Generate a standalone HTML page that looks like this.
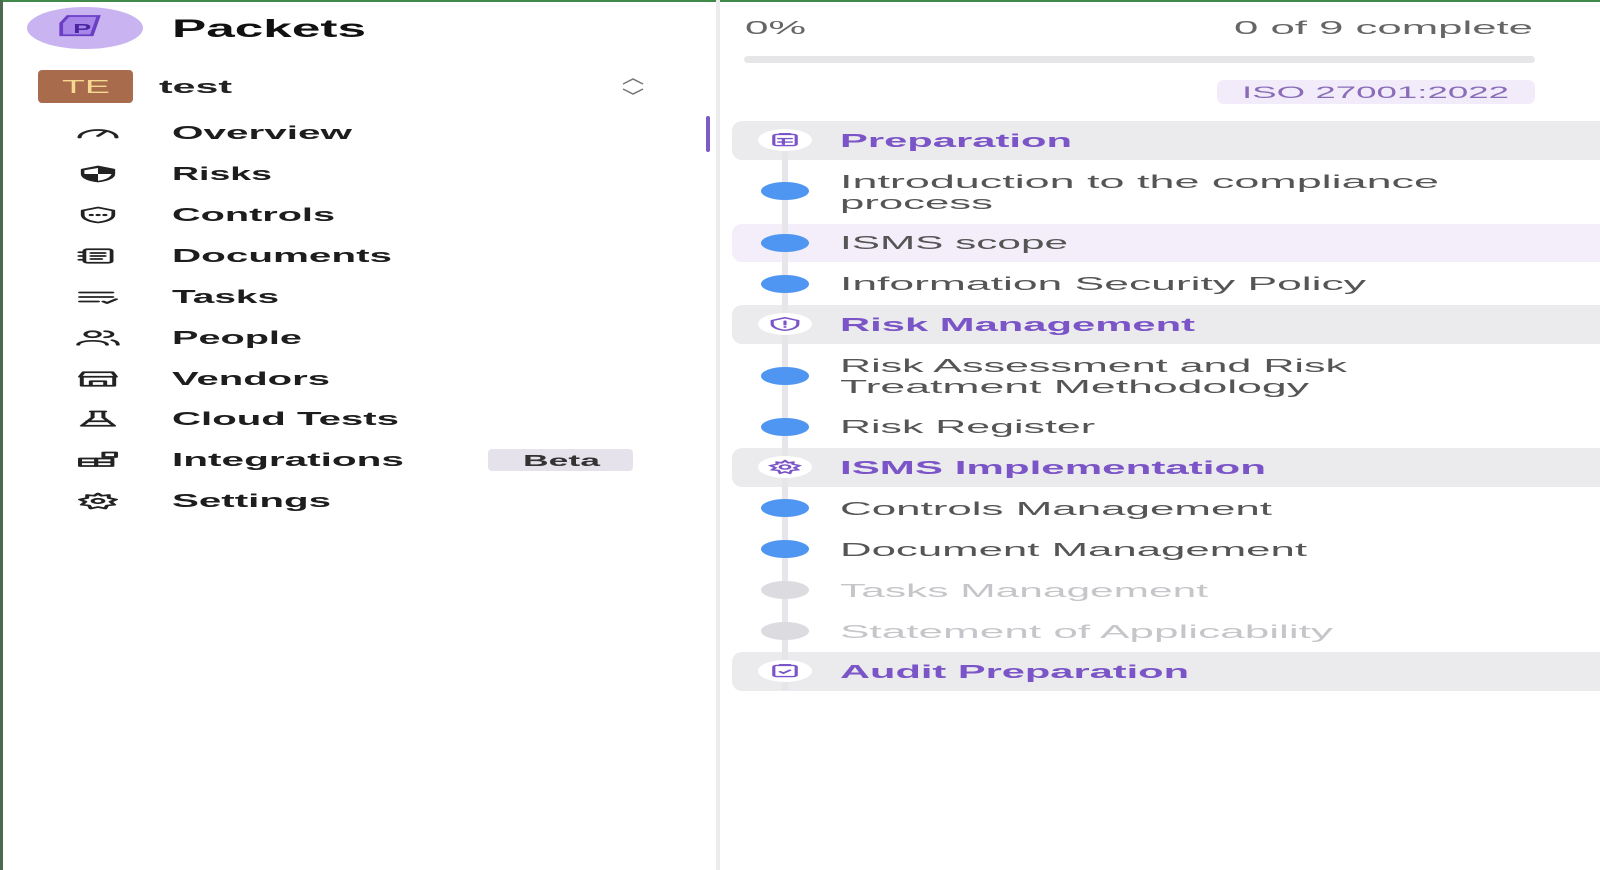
<!DOCTYPE html>
<html><head><meta charset="utf-8"><style>
html,body{margin:0;padding:0;background:#fff;width:1600px;height:870px;overflow:hidden}
svg{display:block}
text{font-family:"Liberation Sans",sans-serif}
</style></head><body>
<svg width="1600" height="870" viewBox="0 0 1600 870" xmlns="http://www.w3.org/2000/svg">
<rect width="1600" height="870" fill="#fff"/>
<rect x="0" y="0" width="1600" height="2" fill="#3f8a4a"/>
<rect x="0" y="0" width="3" height="870" fill="#4c6a50"/>
<rect x="716" y="0" width="4" height="870" fill="#ececee"/>
<rect x="706" y="116" width="4" height="36" rx="2" fill="#7b5cc4"/>

<ellipse cx="85" cy="28" rx="58" ry="21" fill="#c9b3f0"/>
<g transform="translate(85,28) scale(1.7,0.8)" fill="none" stroke="#6b3fc4" stroke-width="2.2">
<path d="M-14 -6 l4 -9 h18 l-4 24 h-18z" fill="#a786ea"/>
<text x="-7" y="6" font-size="16" font-weight="bold" fill="#4a24a0" stroke="none">P</text>
</g>
<text x="172" y="37" font-size="25" font-weight="bold" fill="#111" textLength="194" lengthAdjust="spacingAndGlyphs">Packets</text>

<rect x="38" y="70" width="95" height="33" rx="4" fill="#a86c4c"/>
<text x="62" y="93" font-size="18" fill="#f6d98e" textLength="48" lengthAdjust="spacingAndGlyphs">TE</text>
<text x="159" y="93" font-size="18" font-weight="bold" fill="#222" textLength="73" lengthAdjust="spacingAndGlyphs">test</text>
<path d="M623 84 l10 -5 l10 5 M623 89 l10 5 l10 -5" fill="none" stroke="#777" stroke-width="1.5"/>

<g font-size="18" font-weight="bold" fill="#1d1d1d">
<text x="172" y="139" textLength="180" lengthAdjust="spacingAndGlyphs">Overview</text>
<text x="172" y="180" textLength="100" lengthAdjust="spacingAndGlyphs">Risks</text>
<text x="172" y="221" textLength="163" lengthAdjust="spacingAndGlyphs">Controls</text>
<text x="172" y="262" textLength="220" lengthAdjust="spacingAndGlyphs">Documents</text>
<text x="172" y="303" textLength="107" lengthAdjust="spacingAndGlyphs">Tasks</text>
<text x="172" y="344" textLength="130" lengthAdjust="spacingAndGlyphs">People</text>
<text x="172" y="385" textLength="158" lengthAdjust="spacingAndGlyphs">Vendors</text>
<text x="172" y="425" textLength="227" lengthAdjust="spacingAndGlyphs">Cloud Tests</text>
<text x="172" y="466" textLength="232" lengthAdjust="spacingAndGlyphs">Integrations</text>
<text x="172" y="507" textLength="159" lengthAdjust="spacingAndGlyphs">Settings</text>
</g>
<rect x="488" y="449" width="145" height="22" rx="4" fill="#e6e2ec"/>
<text x="523" y="466" font-size="16" font-weight="bold" fill="#333" textLength="77" lengthAdjust="spacingAndGlyphs">Beta</text>

<g fill="none" stroke="#222" stroke-width="2.2" stroke-linecap="round" stroke-linejoin="round">
<g transform="translate(98,133) scale(1.85,0.75)"><path d="M-10 6 A10 10 0 0 1 10 6 M0 4 L4 -2"/></g>
<g transform="translate(98,174) scale(1.7,0.75)"><path d="M0 -10 L9 -6 V0 C9 6 4 9 0 10 C-4 9 -9 6 -9 0 V-6Z" fill="#222"/><path d="M0 0 H8 C7 5 4 8 0 9Z M0 0 H-8 V-5 L0 -8Z" fill="#fff" stroke="none"/></g>
<g transform="translate(98,215) scale(1.7,0.75)"><path d="M0 -10 L9 -6 V0 C9 6 4 9 0 10 C-4 9 -9 6 -9 0 V-6Z"/><path d="M-4 0h.1M0 0h.1M4 0h.1" stroke-width="3"/></g>
<g transform="translate(98,256) scale(1.7,0.75)"><rect x="-8" y="-9" width="16" height="18" rx="2"/><path d="M-4 -4 H4 M-4 0 H4 M-4 4 H2 M-11 -5 H-8 M-11 0 H-8 M-11 5 H-8"/></g>
<g transform="translate(98,297) scale(1.8,0.75)"><path d="M-10 -6 H8 M-10 0 H8 M-10 6 H0 M3 6 L5 8 L10 3"/></g>
<g transform="translate(98,338) scale(1.8,0.75)"><circle cx="-3" cy="-5" r="4"/><path d="M-11 9 C-11 2 5 2 5 9 M4 -9 A4 4 0 0 1 4 -1 M8 3 C10 4 11 6 11 9"/></g>
<g transform="translate(98,379) scale(1.8,0.75)"><path d="M-10 -3 L-8 -9 H8 L10 -3 Z M-9 -3 V9 H9 V-3 M-4 9 V3 H4 V9"/></g>
<g transform="translate(98,419) scale(1.8,0.75)"><path d="M-4 -10 H4 M-3 -10 V-2 L-9 9 H9 L3 -2 V-10 M-6 3 H6"/></g>
<g transform="translate(98,460) scale(1.8,0.75)"><rect x="-10" y="-2" width="9" height="10"/><rect x="-1" y="-2" width="9" height="10"/><rect x="3" y="-10" width="7" height="6"/><path d="M-10 3 H8"/></g>
<g transform="translate(98,501) scale(1.8,0.75)"><circle r="3"/><path d="M0 -10 L2 -7 L6 -8 L6 -4 L10 -2 L7 1 L9 5 L5 6 L4 10 L0 8 L-4 10 L-5 6 L-9 5 L-7 1 L-10 -2 L-6 -4 L-6 -8 L-2 -7Z"/></g>
</g>

<text x="745" y="34" font-size="18" fill="#666" textLength="61" lengthAdjust="spacingAndGlyphs">0%</text>
<text x="1234" y="34" font-size="18" fill="#666" textLength="299" lengthAdjust="spacingAndGlyphs">0 of 9 complete</text>
<rect x="744" y="56" width="791" height="7" rx="3.5" fill="#e6e6e9"/>
<rect x="1217" y="80" width="318" height="24" rx="7" fill="#f1ebfa"/>
<text x="1242" y="98" font-size="17" fill="#8a6cb8" textLength="267" lengthAdjust="spacingAndGlyphs">ISO 27001:2022</text>

<g fill="#ebebee">
<rect x="732" y="121" width="880" height="39" rx="10"/>
<rect x="732" y="305" width="880" height="39" rx="10"/>
<rect x="732" y="448" width="880" height="39" rx="10"/>
<rect x="732" y="652" width="880" height="39" rx="10"/>
</g>
<rect x="732" y="224" width="880" height="38" rx="10" fill="#f3eef9"/>
<rect x="782" y="140" width="6" height="550" fill="#e6e6ea"/>

<g fill="#ffffff">
<ellipse cx="785" cy="140" rx="27" ry="11"/>
<ellipse cx="785" cy="324" rx="27" ry="11"/>
<ellipse cx="785" cy="467" rx="27" ry="11"/>
<ellipse cx="785" cy="671" rx="27" ry="11"/>
</g>
<g fill="none" stroke="#7b55c7" stroke-width="2" stroke-linecap="round">
<g transform="translate(785,140) scale(1.6,0.7)"><rect x="-7" y="-8" width="14" height="16" rx="2"/><path d="M-3 -9 H3 M-4 -2 H4 M-4 3 H4 M-1 -2 V6"/></g>
<g transform="translate(785,324) scale(1.6,0.7)"><path d="M0 -9 L8 -5 V0 C8 5 4 8 0 9 C-4 8 -8 5 -8 0 V-5Z M0 -4 V1 M0 4 V4.5"/></g>
<g transform="translate(785,467) scale(1.6,0.7)"><circle r="3"/><path d="M0 -9 L2 -6 L5 -7 L5 -4 L9 -2 L6 1 L8 4 L4 5 L3 9 L0 7 L-3 9 L-4 5 L-8 4 L-6 1 L-9 -2 L-5 -4 L-5 -7 L-2 -6Z"/></g>
<g transform="translate(785,671) scale(1.6,0.7)"><rect x="-7" y="-8" width="14" height="16" rx="2"/><path d="M-3 -9 H3 M-3 1 L-1 3 L3 -1"/></g>
</g>

<g fill="#4f96f2">
<ellipse cx="785" cy="191" rx="24" ry="9"/>
<ellipse cx="785" cy="243" rx="24" ry="9"/>
<ellipse cx="785" cy="284" rx="24" ry="9"/>
<ellipse cx="785" cy="376" rx="24" ry="9"/>
<ellipse cx="785" cy="427" rx="24" ry="9"/>
<ellipse cx="785" cy="508" rx="24" ry="9"/>
<ellipse cx="785" cy="549" rx="24" ry="9"/>
</g>
<g fill="#dcdce0">
<ellipse cx="785" cy="590" rx="24" ry="9"/>
<ellipse cx="785" cy="631" rx="24" ry="9"/>
</g>

<g font-size="18" font-weight="bold" fill="#7b55c7">
<text x="840" y="147" textLength="232" lengthAdjust="spacingAndGlyphs">Preparation</text>
<text x="840" y="331" textLength="355" lengthAdjust="spacingAndGlyphs">Risk Management</text>
<text x="840" y="474" textLength="426" lengthAdjust="spacingAndGlyphs">ISMS Implementation</text>
<text x="840" y="678" textLength="349" lengthAdjust="spacingAndGlyphs">Audit Preparation</text>
</g>
<g font-size="18" fill="#555">
<text x="840" y="188" textLength="599" lengthAdjust="spacingAndGlyphs">Introduction to the compliance</text>
<text x="840" y="209" textLength="153" lengthAdjust="spacingAndGlyphs">process</text>
<text x="840" y="249" textLength="228" lengthAdjust="spacingAndGlyphs">ISMS scope</text>
<text x="840" y="290" textLength="526" lengthAdjust="spacingAndGlyphs">Information Security Policy</text>
<text x="840" y="372" textLength="507" lengthAdjust="spacingAndGlyphs">Risk Assessment and Risk</text>
<text x="840" y="393" textLength="469" lengthAdjust="spacingAndGlyphs">Treatment Methodology</text>
<text x="840" y="433" textLength="255" lengthAdjust="spacingAndGlyphs">Risk Register</text>
<text x="840" y="515" textLength="432" lengthAdjust="spacingAndGlyphs">Controls Management</text>
<text x="840" y="556" textLength="467" lengthAdjust="spacingAndGlyphs">Document Management</text>
</g>
<g font-size="18" fill="#c6c6ca">
<text x="840" y="597" textLength="368" lengthAdjust="spacingAndGlyphs">Tasks Management</text>
<text x="840" y="638" textLength="493" lengthAdjust="spacingAndGlyphs">Statement of Applicability</text>
</g>
</svg>
</body></html>
